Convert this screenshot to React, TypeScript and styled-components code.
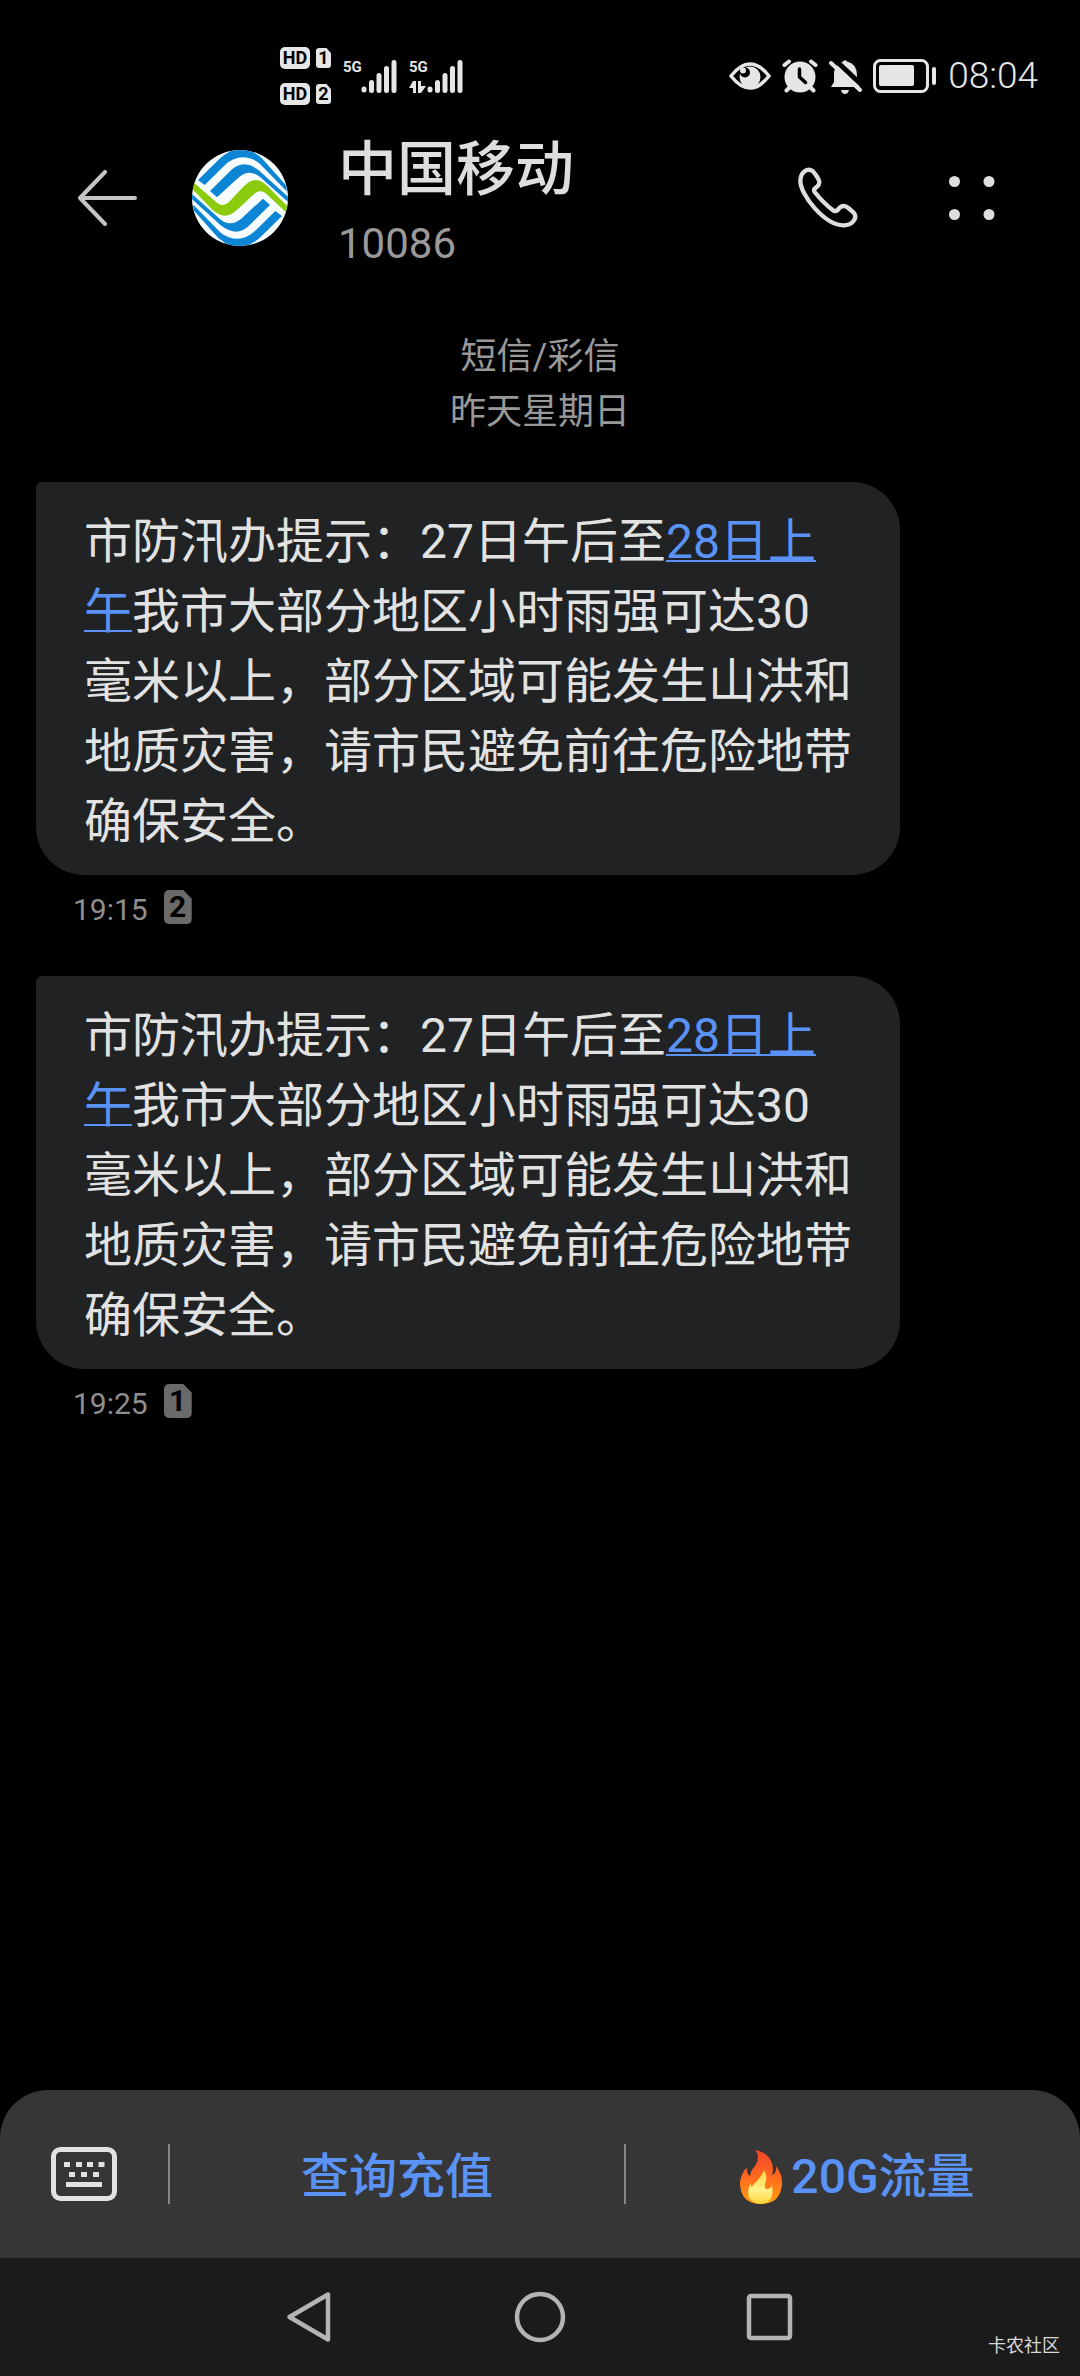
import React from "react";
import styled, { createGlobalStyle } from "styled-components";

const GlobalStyle = createGlobalStyle`
  * { box-sizing: border-box; }
  body {
    margin: 0;
    background: #000;
    color: #e2e2e2;
    font-family: Roboto, "Noto Sans CJK SC", sans-serif;
  }
  button {
    margin: 0;
    padding: 0;
    border: 0;
    background: none;
    color: inherit;
    font: inherit;
    cursor: pointer;
  }
  svg { display: block; flex: none; }
`;

const Screen = styled.div`
  position: relative;
  display: flex;
  flex-direction: column;
  min-height: 100vh;
`;

/* ---------- status bar ---------- */

const StatusBar = styled.div`
  display: flex;
  align-items: center;
  justify-content: space-between;
  height: 108px;
  padding: 44px 42px 0 280px;
`;

const StatusGroup = styled.div<{ $gap: number }>`
  display: flex;
  align-items: center;
  gap: ${(p) => p.$gap}px;
`;

const SimLines = styled.div`
  display: grid;
  gap: 14px;
`;

const SimLine = styled.div`
  display: flex;
  align-items: center;
  gap: 6px;
`;

const HdBadge = styled.span`
  width: 30px;
  height: 22px;
  border-radius: 5px;
  background: #e6e6e6;
  color: #000;
  font-size: 18px;
  font-weight: 700;
  line-height: 22px;
  text-align: center;
`;

const SimChip = styled.span<{ $large?: boolean }>`
  width: ${(p) => (p.$large ? 28 : 15)}px;
  height: ${(p) => (p.$large ? 34 : 20)}px;
  border-radius: ${(p) => (p.$large ? 5 : 3)}px;
  background: ${(p) => (p.$large ? "#6a6a6a" : "#e6e6e6")};
  color: #000;
  clip-path: polygon(0 0, 70% 0, 100% 26%, 100% 100%, 0 100%);
  font-size: ${(p) => (p.$large ? 30 : 18)}px;
  font-weight: 700;
  line-height: ${(p) => (p.$large ? 34 : 20)}px;
  text-align: center;
`;

const Signal = styled.div`
  display: flex;
  align-items: flex-end;
  height: 33px;
`;

const SignalLabel = styled.div`
  display: flex;
  flex-direction: column;
  justify-content: space-between;
  width: 18px;
  height: 33px;
  color: #e6e6e6;
  font-size: 15px;
  font-weight: 700;
  line-height: 15px;
`;

const Clock = styled.time`
  color: #e6e6e6;
  font-size: 37px;
  font-weight: 300;
  line-height: 48px;
`;

/* ---------- conversation header ---------- */

const Header = styled.header`
  display: flex;
  align-items: center;
  height: 180px;
  padding: 0 72px;
`;

const IconButton = styled.button`
  display: grid;
  place-items: center;
  width: 72px;
  height: 72px;
`;

const Avatar = styled.div`
  margin-left: 48px;
`;

const Contact = styled.div`
  flex: 1;
  padding: 6px 0 0 50px;
`;

const ContactName = styled.h1`
  margin: 0;
  color: #dedede;
  font-size: 59px;
  font-weight: 500;
  line-height: 72px;
`;

const ContactNumber = styled.div`
  margin-top: 14px;
  color: #9a9a9a;
  font-size: 42px;
  line-height: 48px;
`;

const HeaderActions = styled.div`
  display: flex;
  gap: 72px;
`;

/* ---------- thread ---------- */

const Thread = styled.main`
  flex: 1;
  padding: 42px 36px;
`;

const DayLabel = styled.div`
  margin-bottom: 42px;
  color: #999;
  font-size: 36px;
  line-height: 55px;
  text-align: center;
`;

const Message = styled.article`
  & + & {
    margin-top: 49px;
  }
`;

const Bubble = styled.p`
  width: fit-content;
  max-width: 864px;
  margin: 0;
  padding: 25px 48px 18px;
  border-radius: 6px 48px 48px 48px;
  background: #212224;
  font-size: 48px;
  line-height: 70px;
`;

const DateLink = styled.a`
  color: #5a93f5;
  text-decoration: underline;
  text-decoration-thickness: 2px;
  text-decoration-skip-ink: none;
  text-underline-offset: 2px;
`;

const Meta = styled.div`
  display: flex;
  align-items: flex-start;
  gap: 16px;
  margin-top: 15px;
  padding-left: 37px;
`;

const SentTime = styled.time`
  padding-top: 3px;
  color: #8f8f8f;
  font-size: 30px;
  line-height: 34px;
`;

/* ---------- bottom bars ---------- */

const MenuBar = styled.nav`
  display: flex;
  align-items: center;
  height: 168px;
  border-radius: 48px 48px 0 0;
  background: #363636;
`;

const KeyboardButton = styled.button`
  display: grid;
  place-items: center;
  width: 168px;
  height: 168px;
`;

const Divider = styled.span`
  width: 2px;
  height: 60px;
  background: #868686;
`;

const MenuButton = styled.button`
  display: flex;
  flex: 1;
  align-items: center;
  justify-content: center;
  height: 168px;
  padding-top: 5px;
  color: #5a93f5;
  font-size: 48px;
  font-weight: 500;
  line-height: 70px;
`;

const SystemNav = styled.nav`
  display: flex;
  align-items: center;
  justify-content: center;
  gap: 158px;
  height: 118px;
  background: #1b1b1b;
`;

const Watermark = styled.span`
  position: absolute;
  right: 20px;
  bottom: 16px;
  color: #d8d8d8;
  font-size: 18px;
  line-height: 28px;
`;

/* ---------- drawings ---------- */

const SignalBars = () => (
  <svg width="36" height="33" viewBox="0 0 36 33" stroke="#e6e6e6" strokeWidth="5" strokeLinecap="round">
    <path d="M3 29v1M10.500 22.500v8M18 15.500v15M25.500 8.500v22M33 2.500v28" />
  </svg>
);

const DataArrows = () => (
  <svg width="17" height="12" viewBox="0 0 17 12" fill="#e6e6e6">
    <path d="M4 0H7v12H4V7H0zM9 0h3v5h5l-5 7H9z" />
  </svg>
);

const EyeIcon = () => (
  <svg width="42" height="28" viewBox="0 0 42 28">
    <path d="M2 14C9 5 15 2 21 2s12 3 19 12c-7 9-13 12-19 12S9 23 2 14z" fill="none" stroke="#e6e6e6" strokeWidth="3.500" />
    <circle cx="21" cy="15" r="10.500" fill="#e6e6e6" />
    <circle cx="16" cy="10.500" r="5" fill="#000" />
    <circle cx="14" cy="8.500" r="3" fill="#e6e6e6" />
  </svg>
);

const AlarmIcon = () => (
  <svg width="36" height="34" viewBox="0 0 36 34" stroke="#e6e6e6" strokeLinecap="round" fill="none">
    <path d="M2.500 6L7 2.500M33.500 6L29 2.500" strokeWidth="4" />
    <path d="M8 28l-3.500 3.500M28 28l3.500 3.500" strokeWidth="4" />
    <circle cx="18" cy="18" r="15.500" fill="#e6e6e6" stroke="none" />
    <path d="M17.500 10v8l6 5.500" stroke="#000" strokeWidth="3.500" strokeLinejoin="round" />
  </svg>
);

const MutedBellIcon = () => (
  <svg width="33" height="35" viewBox="0 0 33 35">
    <path
      d="M11 4q2-1 3-1.500Q16 0 18 2.500 28 5 28 16v7l3 5H2l3-5V15q0-7 6-11z"
      fill="#e6e6e6"
    />
    <path d="M12 31h8q-1 4-4 4t-4-4z" fill="#e6e6e6" />
    <path d="M5 0l30 28" stroke="#000" strokeWidth="5" />
    <path d="M2 4l29 27" stroke="#e6e6e6" strokeWidth="4" strokeLinecap="round" />
  </svg>
);

const BatteryIcon = () => (
  <svg width="64" height="34" viewBox="0 0 64 34">
    <rect x="1.500" y="1.500" width="53" height="31" rx="6" fill="none" stroke="#e6e6e6" strokeWidth="3" />
    <rect x="6" y="6" width="35" height="21" rx="2" fill="#e6e6e6" />
    <rect x="59" y="8" width="4" height="18" rx="2" fill="#e6e6e6" />
  </svg>
);

const BackIcon = () => (
  <svg width="60" height="56" viewBox="0 0 60 56" fill="none" stroke="#c4c4c4" strokeWidth="4" strokeLinecap="round" strokeLinejoin="round">
    <path d="M27 2L2 28l25 26M2 28h55" />
  </svg>
);

const CarrierLogo = () => (
  <svg width="96" height="96" viewBox="66 60 288 288" role="img" aria-label="中国移动">
    <defs>
      <clipPath id="disc">
        <circle cx="210" cy="204" r="144" />
      </clipPath>
      <g id="waves" fill="#0b85d4">
        <path d="M84 150L145 90Q175 60 212 55Q245 58 275 84L350 168V184L268 100Q245 82 218 82Q190 82 165 105L104 165z" />
        <path d="M120 183L180 124Q200 103 224 103Q245 104 268 122L356 202V218L278 148Q258 128 238 128Q222 128 204 144L141 202z" />
      </g>
    </defs>
    <g clipPath="url(#disc)">
      <rect x="66" y="60" width="288" height="288" fill="#f7fcff" />
      <use href="#waves" />
      <use href="#waves" transform="rotate(180 210 204)" />
      <path
        d="M60 148L134 212Q148 226 160 225Q170 224 182 211L222 168Q240 150 258 150Q274 150 292 168L360 236V258L296 198Q282 183 270 184Q260 184 250 194L203 238Q184 257 164 257Q146 256 128 240L60 170z"
        fill="#8ccb0c"
      />
    </g>
  </svg>
);

const PhoneIcon = () => (
  <svg width="66" height="66" viewBox="76 76 198 198" fill="none" stroke="#dedede" strokeWidth="13" strokeLinejoin="round">
    <path d="M130 95Q117 86 105 95Q92 105 92 124C92 166 165 257 222 257Q240 257 250 246Q263 232 252 219L236 205Q222 193 210 204L204 211Q197 217 189 211Q160 189 135 157Q131 151 136 146L143 140Q153 131 146 118Q140 106 130 95z" />
  </svg>
);

const MoreIcon = () => (
  <svg width="48" height="48" viewBox="0 0 48 48" fill="#dedede">
    <circle cx="6.500" cy="7.500" r="5.500" />
    <circle cx="41" cy="7.500" r="5.500" />
    <circle cx="6.500" cy="40.500" r="5.500" />
    <circle cx="41" cy="40.500" r="5.500" />
  </svg>
);

const KeyboardIcon = () => (
  <svg width="66" height="54" viewBox="0 0 66 54">
    <rect x="2.500" y="2.500" width="61" height="49" rx="7" fill="none" stroke="#e2e2e2" strokeWidth="5" />
    <path
      d="M13 17.500h6M25 17.500h6M36 17.500h6M47.500 17.500h6M18 27.500h6M30 27.500h6M42 27.500h6M15 37.500h36"
      stroke="#e2e2e2"
      strokeWidth="5"
    />
  </svg>
);

const FireIcon = () => (
  <svg width="60" height="56" viewBox="-8 0 60 56">
    <defs>
      <linearGradient id="flame" x1="0" y1="0" x2="0" y2="1">
        <stop offset="0" stopColor="#f0442c" />
        <stop offset="0.500" stopColor="#ff6a1f" />
        <stop offset="1" stopColor="#ff9d0e" />
      </linearGradient>
      <linearGradient id="core" x1="0" y1="0" x2="0" y2="1">
        <stop offset="0" stopColor="#ffd93b" />
        <stop offset="0.600" stopColor="#fff08a" />
        <stop offset="1" stopColor="#ffd23a" />
      </linearGradient>
    </defs>
    <path
      d="M16 1Q29 3 33 14Q35 21 33 26Q38 24 37 17Q44 26 43 36Q41 55 22 55Q2 55 1 35Q1 26 8 18Q7 24 11 27Q12 21 16 17Q22 8 16 1z"
      fill="url(#flame)"
    />
    <path
      d="M25 21Q23 27 17 33Q13 37 13 38Q11 36 12 33Q3 53 22 55Q36 54 33 36Q32 40 28 40Q25 40 26 35Q29 27 25 21z"
      fill="url(#core)"
    />
  </svg>
);

const NavIcon = ({ shape }: { shape: "back" | "home" | "recent" }) => (
  <svg width="52" height="52" viewBox="0 0 52 52" fill="none" stroke="#b4b4b4" strokeWidth="4.500" strokeLinejoin="round">
    {shape === "back" && <path d="M44 3.500v45L5.500 26z" />}
    {shape === "home" && <circle cx="26" cy="26" r="23" />}
    {shape === "recent" && <rect x="5" y="5" width="41" height="42" rx="2" />}
  </svg>
);

/* ---------- screen ---------- */

const messages = [
  { time: "19:15", sim: 2 },
  { time: "19:25", sim: 1 },
];

export default function App() {
  return (
    <Screen lang="zh-CN">
      <GlobalStyle />
      <StatusBar>
        <StatusGroup $gap={12}>
          <SimLines>
            {[1, 2].map((n) => (
              <SimLine key={n}>
                <HdBadge>HD</HdBadge>
                <SimChip>{n}</SimChip>
              </SimLine>
            ))}
          </SimLines>
          <Signal>
            <SignalLabel>5G</SignalLabel>
            <SignalBars />
          </Signal>
          <Signal>
            <SignalLabel>
              5G
              <DataArrows />
            </SignalLabel>
            <SignalBars />
          </Signal>
        </StatusGroup>
        <StatusGroup $gap={11}>
          <EyeIcon />
          <AlarmIcon />
          <MutedBellIcon />
          <BatteryIcon />
          <Clock>08:04</Clock>
        </StatusGroup>
      </StatusBar>

      <Header>
        <IconButton aria-label="返回">
          <BackIcon />
        </IconButton>
        <Avatar>
          <CarrierLogo />
        </Avatar>
        <Contact>
          <ContactName>中国移动</ContactName>
          <ContactNumber>10086</ContactNumber>
        </Contact>
        <HeaderActions>
          <IconButton aria-label="拨打电话">
            <PhoneIcon />
          </IconButton>
          <IconButton aria-label="更多">
            <MoreIcon />
          </IconButton>
        </HeaderActions>
      </Header>

      <Thread>
        <DayLabel>
          <div>短信/彩信</div>
          <div>昨天星期日</div>
        </DayLabel>
        {messages.map((m) => (
          <Message key={m.time}>
            <Bubble>
              市防汛办提示：27日午后至<DateLink href="#date">28日上午</DateLink>
              我市大部分地区小时雨强可达30毫米以上，部分区域可能发生山洪和地质灾害，请市民避免前往危险地带确保安全。
            </Bubble>
            <Meta>
              <SentTime>{m.time}</SentTime>
              <SimChip $large>{m.sim}</SimChip>
            </Meta>
          </Message>
        ))}
      </Thread>

      <MenuBar>
        <KeyboardButton aria-label="键盘">
          <KeyboardIcon />
        </KeyboardButton>
        <Divider />
        <MenuButton>查询充值</MenuButton>
        <Divider />
        <MenuButton>
          <FireIcon />
          20G流量
        </MenuButton>
      </MenuBar>

      <SystemNav>
        <IconButton aria-label="后退">
          <NavIcon shape="back" />
        </IconButton>
        <IconButton aria-label="主屏幕">
          <NavIcon shape="home" />
        </IconButton>
        <IconButton aria-label="最近任务">
          <NavIcon shape="recent" />
        </IconButton>
      </SystemNav>
      <Watermark>卡农社区</Watermark>
    </Screen>
  );
}
